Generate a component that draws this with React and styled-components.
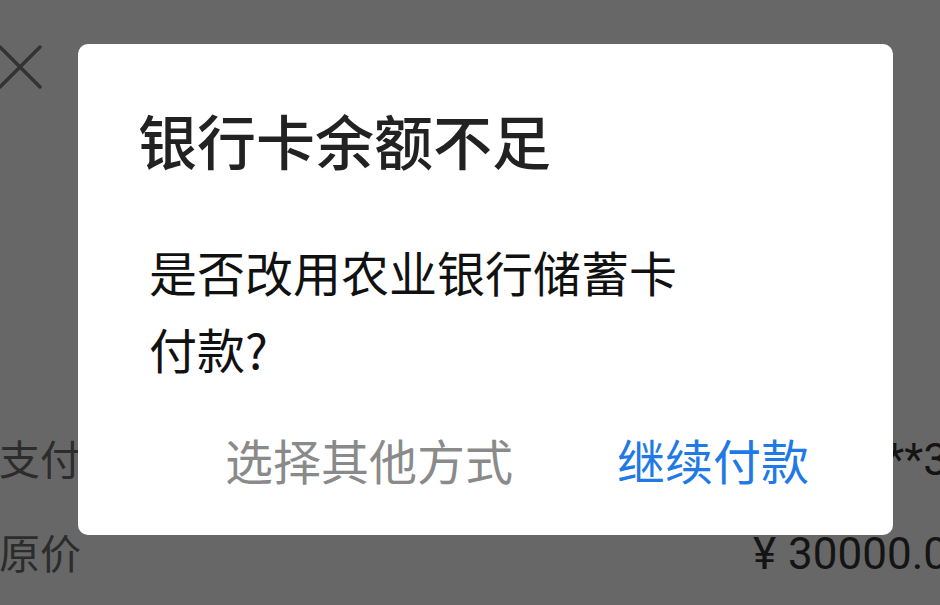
import React from "react";
import styled, { createGlobalStyle } from "styled-components";

const Global = createGlobalStyle`
  html, body {
    margin: 0;
    padding: 0;
    background: #676767;
    overflow: hidden;
  }
  body {
    font-family: "Noto Sans CJK SC", "Noto Sans", sans-serif;
  }
  #root {
    width: 940px;
    height: 605px;
    overflow: hidden;
  }
`;

const Page = styled.div`
  width: 948px;
  height: 605px;
  background: #676767;
  display: flex;
  flex-direction: column;
`;

const Header = styled.div`
  height: 134px;
  display: flex;
  align-items: center;
`;

const CloseButton = styled.div`
  width: 44px;
  height: 44px;
  margin-left: -2px;
  display: flex;
  svg { display: block; }
`;

const Rows = styled.div`
  margin-top: 276px;
  display: flex;
  flex-direction: column;
`;

const Row = styled.div`
  height: 94px;
  display: flex;
  justify-content: space-between;
  align-items: baseline;
  line-height: 94px;
`;

const Label = styled.span`
  font-family: "Noto Sans CJK SC", sans-serif;
  font-size: 41px;
  color: #2c2c2c;
  margin-left: -1px;
`;

const Value = styled.span`
  font-family: Roboto, "Noto Sans", sans-serif;
  font-size: 44px;
  color: #141414;
  white-space: nowrap;
`;

const Currency = styled.span`
  margin-right: 12px;
`;

const Dialog = styled.div`
  position: fixed;
  top: 44px;
  left: 78px;
  width: 815px;
  height: 491px;
  box-sizing: border-box;
  background: #ffffff;
  border-radius: 10px;
  padding-top: 66px;
  display: flex;
  flex-direction: column;
`;

const Title = styled.h1`
  margin: 0 0 0 60px;
  font-family: "Noto Sans CJK SC", sans-serif;
  font-size: 59px;
  line-height: 59px;
  font-weight: 500;
  color: #222222;
`;

const Message = styled.p`
  margin: 64px 0 0 71px;
  width: 540px;
  font-family: "Noto Sans CJK SC", sans-serif;
  font-size: 48px;
  line-height: 77px;
  color: #111111;
`;

const Actions = styled.div`
  margin-top: 48px;
  display: flex;
  justify-content: flex-end;
  gap: 104px;
  padding-right: 84px;
`;

const ActionButton = styled.button`
  border: none;
  background: none;
  padding: 0;
  margin: 0;
  font-family: "Noto Sans CJK SC", sans-serif;
  font-size: 48px;
  line-height: 48px;
  color: ${(p) => (p.$primary ? "#1f7ae6" : "#8a8a8a")};
  cursor: pointer;
`;

export default function App() {
  return (
    <>
      <Global />
      <Page>
        <Header>
          <CloseButton>
            <svg width="44" height="44" viewBox="0 0 44 44">
              <path
                d="M2 2 L42 42 M42 2 L2 42"
                stroke="#333333"
                strokeWidth="3.5"
                strokeLinecap="round"
                fill="none"
              />
            </svg>
          </CloseButton>
        </Header>
        <Rows>
          <Row>
            <Label>支付</Label>
            <Value>**3</Value>
          </Row>
          <Row>
            <Label>原价</Label>
            <Value>
              <Currency>¥</Currency>30000.0
            </Value>
          </Row>
        </Rows>
      </Page>
      <Dialog>
        <Title>银行卡余额不足</Title>
        <Message>是否改用农业银行储蓄卡付款?</Message>
        <Actions>
          <ActionButton>选择其他方式</ActionButton>
          <ActionButton $primary>继续付款</ActionButton>
        </Actions>
      </Dialog>
    </>
  );
}
